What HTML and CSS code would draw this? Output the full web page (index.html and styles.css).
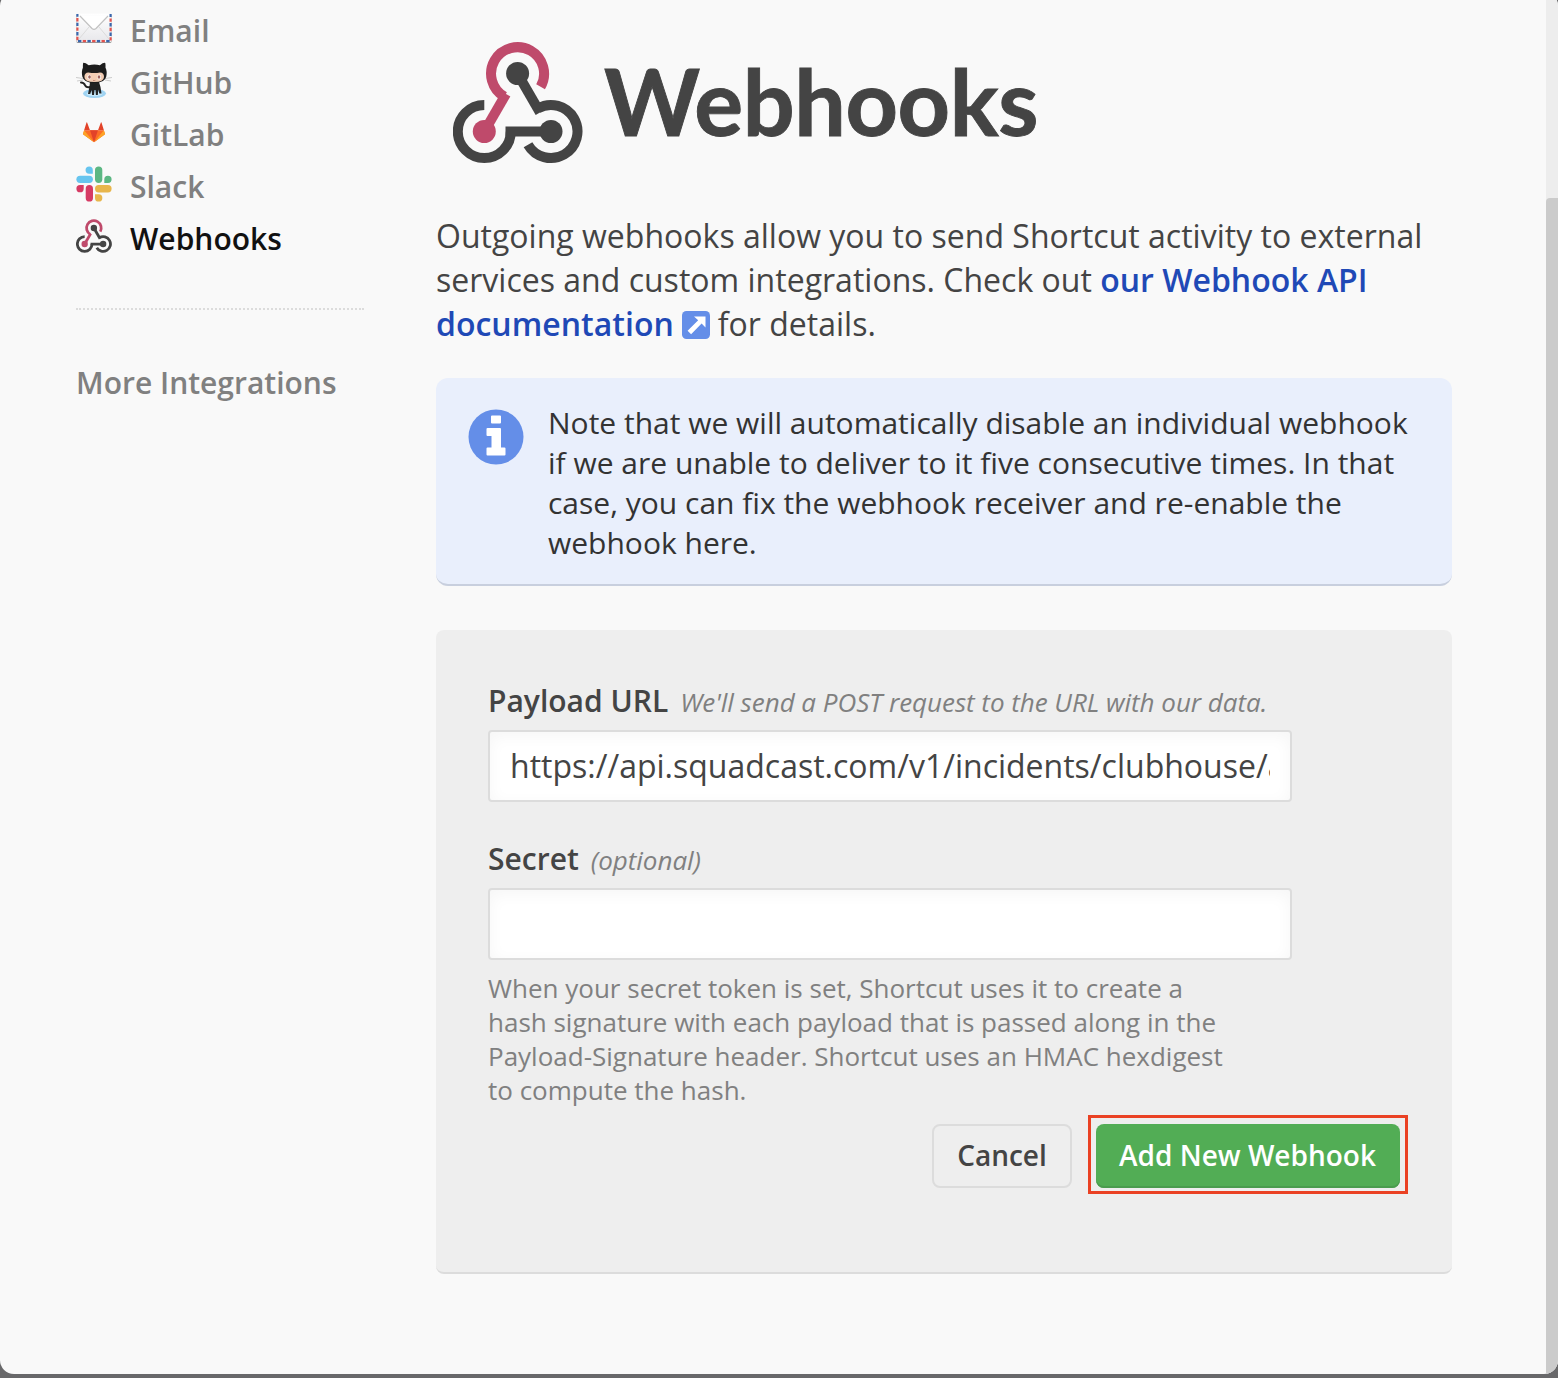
FILE: index.html
```html
<!DOCTYPE html>
<html lang="en">
<head>
<meta charset="utf-8">
<title>Webhooks</title>
<link rel="stylesheet" href="styles.css">
</head>
<body>
<div class="panel">
  <aside class="sidebar">
    <nav>
      <a class="nav-item">
        <svg class="nav-icon" viewBox="0 0 36 36">
          <defs><linearGradient id="env" x1="0" y1="0" x2="0" y2="1"><stop offset="0" stop-color="#fff"/><stop offset="1" stop-color="#e9e9ec"/></linearGradient></defs>
          <rect x=".5" y="4.500" width="35" height="28.500" rx="1.500" fill="#999"/>
          <rect x=".5" y="3.500" width="35" height="28.500" rx="1.500" fill="#f5f5f5"/>
          <path d="M1.500 4V31H34.500V4" fill="none" stroke="#e2534f" stroke-width="2.400" stroke-dasharray="3.400 6" stroke-dashoffset="-4"/>
          <path d="M1.500 4V31H34.500V4" fill="none" stroke="#3a66ac" stroke-width="2.400" stroke-dasharray="3.400 6" stroke-dashoffset="0.700"/>
          <rect x="2.700" y="3.500" width="30.600" height="26.300" fill="url(#env)"/>
          <path d="M3 29 13 17M33 29 23 17" stroke="#dcdcdc" fill="none"/>
          <path d="M4 6 16 18.500q2 1.600 4 0L32 6" stroke="#c2c2c2" stroke-width="1.200" fill="#fff"/>
        </svg><span>Email</span></a>
      <a class="nav-item">
        <svg class="nav-icon" viewBox="0 0 36 36">
          <ellipse cx="18.500" cy="31.500" rx="11.500" ry="4.500" fill="#9fd3f2"/>
          <ellipse cx="18.500" cy="31.800" rx="8" ry="2.500" fill="#c6e7f8"/>
          <path d="M5 20.500q3 0 4.200 3 1.300 2.500 5 1.500" stroke="#222" stroke-width="2" fill="none" stroke-linecap="round"/>
          <path d="M14 20h9l1.500 5 1 6.500h-2.200l-1-4-.5 5.500h-1.900l-.4-5h-1l-.5 5h-1.900l-.5-5-1.400 4h-2.200l1.400-7z" fill="#222"/>
          <path d="M0 15.500l7 1M1 19l6-1M36 15.500l-7 1M35 19l-6-1" stroke="#ccc" stroke-width="1"/>
          <path d="M7.500 0.800q-.7 0-.6 5Q5.300 9 6.300 14.500q1.500 6.500 12 6.500t12-6.500q1-5.500-.8-8.700.2-5-.6-5-2.200 0-5 2.400-5.500-1.300-11.200 0Q9.500.8 7.500.8z" fill="#1d1d1d"/>
          <path d="M12.500 10.500q6 1 11.500 0 4 .2 4 4.500 0 5-9.800 5t-9.800-5q0-4.300 4.100-4.500z" fill="#f3cdb4"/>
          <ellipse cx="13.200" cy="14.900" rx="1.900" ry="2.500" fill="#fff"/><ellipse cx="23.200" cy="14.900" rx="1.900" ry="2.500" fill="#fff"/>
          <ellipse cx="13.500" cy="15" rx="1.300" ry="1.800" fill="#9c625d"/><ellipse cx="23" cy="15" rx="1.300" ry="1.800" fill="#9c625d"/>
          <path d="M17 18.300q1.200.8 2.400 0" stroke="#b56f5e" fill="none" stroke-width=".7"/>
        </svg><span>GitHub</span></a>
      <a class="nav-item">
        <svg class="nav-icon" viewBox="0 0 36 36">
          <path d="M18 28.300 7 20.200 8.200 16.300H27.800L29 20.200z" fill="#fc6d26"/>
          <path d="M18 28.300 14 16.300H22z" fill="#e24329"/>
          <path d="M18 28.300 7.300 20.400q-.5-.4-.3-1l1.100-3.200zM18 28.300l10.700-7.900q.5-.4.3-1l-1.100-3.200z" fill="#fca326"/>
          <path d="M8.100 16.300 10.500 8.500q.3-.5.600 0L14 16.300zM27.900 16.300 25.500 8.500q-.3-.5-.6 0L22 16.300z" fill="#e24329"/>
        </svg><span>GitLab</span></a>
      <a class="nav-item">
        <svg class="nav-icon" viewBox="0 0 36 36">
          <path d="M13.200.4a3.600 3.600 0 0 1 3.600 3.600v3.700h-3.600a3.650 3.650 0 0 1 0-7.300z" fill="#67c5ef"/>
          <rect x=".4" y="9.700" width="16.500" height="7.300" rx="3.650" fill="#67c5ef"/>
          <rect x="19" y=".4" width="7.300" height="16.500" rx="3.650" fill="#5cb783"/>
          <path d="M35.600 13.300a3.600 3.600 0 0 1-3.600 3.600h-3.700v-3.600a3.650 3.650 0 0 1 7.300 0z" fill="#5cb783"/>
          <path d="M.4 22.700a3.600 3.600 0 0 1 3.600-3.600h3.700v3.600a3.650 3.650 0 0 1-7.300 0z" fill="#d63b64"/>
          <rect x="9.700" y="19.100" width="7.300" height="16.500" rx="3.650" fill="#d63b64"/>
          <rect x="19" y="19.100" width="16.600" height="7.300" rx="3.650" fill="#e8b64c"/>
          <path d="M22.700 35.600a3.600 3.600 0 0 1-3.700-3.600v-3.700h3.700a3.650 3.650 0 0 1 0 7.300z" fill="#e8b64c"/>
        </svg><span>Slack</span></a>
      <a class="nav-item active">
        <svg class="nav-icon" viewBox="0 -4.500 130 130"><use href="#hook"/></svg><span>Webhooks</span></a>
    </nav>
    <hr class="divider">
    <a class="more">More Integrations</a>
  </aside>

  <main class="content">
    <header class="brand">
      <svg class="brand-mark" viewBox="0 0 130 122">
        <g id="hook" fill="none" stroke-width="10">
          <path d="M87.600 44.800A26.500 26.500 0 1 0 51.400 54.700" stroke="#bf4a6b"/>
          <path d="M53 51.900 31.300 89.500" stroke="#bf4a6b"/>
          <circle cx="31.300" cy="89.500" r="11.500" fill="#bf4a6b"/>
          <path d="M31.300 63a26.500 26.500 0 1 0 26.500 26.500" stroke="#444"/>
          <path d="M52.500 89.500H98" stroke="#444"/>
          <path d="M75 102.700A26.500 26.500 0 1 0 84.800 66.500" stroke="#444"/>
          <path d="M64.600 31.700 87 70.500" stroke="#444"/>
          <circle cx="64.600" cy="31.500" r="11.500" fill="#444"/>
          <circle cx="98" cy="89.500" r="11.500" fill="#444"/>
        </g>
      </svg>
      <h1>Webhooks</h1>
    </header>

    <p class="intro">Outgoing webhooks allow you to send Shortcut activity to external<br>services and custom integrations. Check out <a>our Webhook API<br>documentation</a><svg class="ext" viewBox="0 0 28 28"><rect width="28" height="28" rx="4.500" fill="#648ee8"/><path d="M12 5.500H23.500V16.500L19.600 12.600 9.100 23.200 5.600 19.700 16.200 9.300z" fill="#fff"/></svg>for details.</p>

    <section class="note">
      <svg class="info" viewBox="0 0 56 56"><circle cx="28" cy="28" r="27.500" fill="#648ee8"/><path d="M24 6.500h8q1 0 1 1v6q0 1-1 1h-8q-1 0-1-1v-6q0-1 1-1zM19.500 19h12.500q1 0 1 1v18.500h3.500q1 0 1 1v6q0 1-1 1h-17q-1 0-1-1v-6q0-1 1-1h4V27h-4q-1 0-1-1v-6q0-1 1-1z" fill="#fff"/></svg>
      <p>Note that we will automatically disable an individual webhook<br>if we are unable to deliver to it five consecutive times. In that<br>case, you can fix the webhook receiver and re-enable the<br>webhook here.</p>
    </section>

    <form class="form">
      <div class="label"><label for="url">Payload URL</label><em>We'll send a POST request to the URL with our data.</em></div>
      <input id="url" class="field" type="text" value="https://api.squadcast.com/v1/incidents/clubhouse/a">
      <div class="label second"><label for="secret">Secret</label><em>(optional)</em></div>
      <input id="secret" class="field" type="text">
      <p class="help">When your secret token is set, Shortcut uses it to create a<br>hash signature with each payload that is passed along in the<br>Payload-Signature header. Shortcut uses an HMAC hexdigest<br>to compute the hash.</p>
      <div class="actions">
        <button type="button" class="cancel">Cancel</button>
        <div class="highlight"><button type="button" class="add">Add New Webhook</button></div>
      </div>
    </form>
  </main>
  <div class="scrollbar"><div class="thumb"></div></div>
</div>
</body>
</html>
```
FILE: styles.css
```css
* { box-sizing: border-box; }
body {
  margin: 0;
  height: 1378px;
  overflow: hidden;
  background: #68686a;
  font-family: "Open Sans", "Noto Sans", sans-serif;
  color: #444;
}
p, h1 { margin: 0; }
.panel {
  display: flex;
  height: 1382px;
  margin-top: -8px;
  padding-top: 8px;
  border-radius: 14px;
  overflow: hidden;
  background: #f9f9f9;
}
.sidebar { width: 436px; padding: 5px 72px 0 76px; flex: none; }
.nav-item {
  display: flex;
  align-items: center;
  height: 52px;
  gap: 18px;
  font-size: 30px;
  font-weight: 600;
  color: #808080;
}
.nav-item span { padding-bottom: 2px; }
.nav-item.active { color: #111; }
.nav-icon { width: 36px; height: 36px; margin-top: -6px; }
.divider { margin: 43px 0 0; border: 0; border-top: 2px dotted #dcdcdc; }
.more {
  display: block;
  margin-top: 53px;
  line-height: 40px;
  font-size: 30px;
  font-weight: 600;
  color: #808080;
  white-space: nowrap;
}
.content { width: 1016px; flex: none; }
.brand { display: flex; height: 214px; padding: 42px 0 0 16.500px; }
.brand-mark { width: 130px; height: 122px; flex: none; }
h1 {
  margin: 4px 0 0 21.500px;
  font: 700 91.500px/110px Lato, sans-serif;
  letter-spacing: -.4px;
  -webkit-text-stroke: .9px #444;
  color: #444;
}
.intro { font-size: 32px; line-height: 44px; letter-spacing: .01px; white-space: nowrap; }
.intro a { color: #1f49b6; font-weight: 600; }
.ext { width: 28px; height: 28px; margin: 0 8px 0 8px; vertical-align: -3px; }
.note {
  display: flex;
  gap: 24px;
  height: 208px;
  margin-top: 32px;
  padding: 25px 32px;
  border-radius: 12px;
  border-bottom: 2px solid #c8cfde;
  background: #e9effc;
  color: #333;
  font-size: 30px;
  line-height: 40px;
  white-space: nowrap;
}
.info { width: 56px; height: 56px; margin-top: 6px; flex: none; }
.form {
  height: 644px;
  margin-top: 44px;
  padding: 50px 44px 0 52px;
  border-radius: 8px;
  border-bottom: 2px solid #dcdcdc;
  background: #eee;
}
.label { display: flex; align-items: baseline; gap: 12px; height: 50px; line-height: 42px; white-space: nowrap; }
.label label { font-size: 30px; font-weight: 600; }
.label em { font-size: 26px; letter-spacing: -.03px; color: #808080; }
.label.second { margin-top: 36px; }
.field {
  display: block;
  width: 804px;
  height: 72px;
  padding: 0 20px 2px;
  border: 2px solid #dcdcdc;
  border-radius: 4px;
  background: #fff;
  box-shadow: inset 0 4px 16px rgba(0, 0, 0, .04);
  font: 32px "Open Sans", "Noto Sans", sans-serif;
  color: #444;
}
.help { margin-top: 11px; font-size: 26px; line-height: 34px; color: #808080; white-space: nowrap; }
.actions { display: flex; justify-content: flex-end; align-items: flex-start; gap: 16px; margin-top: 8px; }
button {
  height: 64px;
  padding: 0 0 2px;
  border-radius: 8px;
  font: 600 28px "Open Sans", "Noto Sans", sans-serif;
}
.cancel { width: 140px; margin-top: 9px; border: 2px solid #dcdcdc; background: transparent; color: #444; }
.highlight { width: 320px; height: 79px; padding: 6px 5px; border: 3px solid #ea4123; }
.add { width: 304px; padding-right: 1px; border: 0; background: #52ad55; box-shadow: inset 0 -2px #4a9c4e; color: #fff; }
.scrollbar { width: 12px; margin: -8px 0 0 94px; padding-top: 206px; background: #ededed; flex: none; }
.thumb { height: 1176px; border-radius: 4px 0 0 0; background: #cbcbcb; }
```
